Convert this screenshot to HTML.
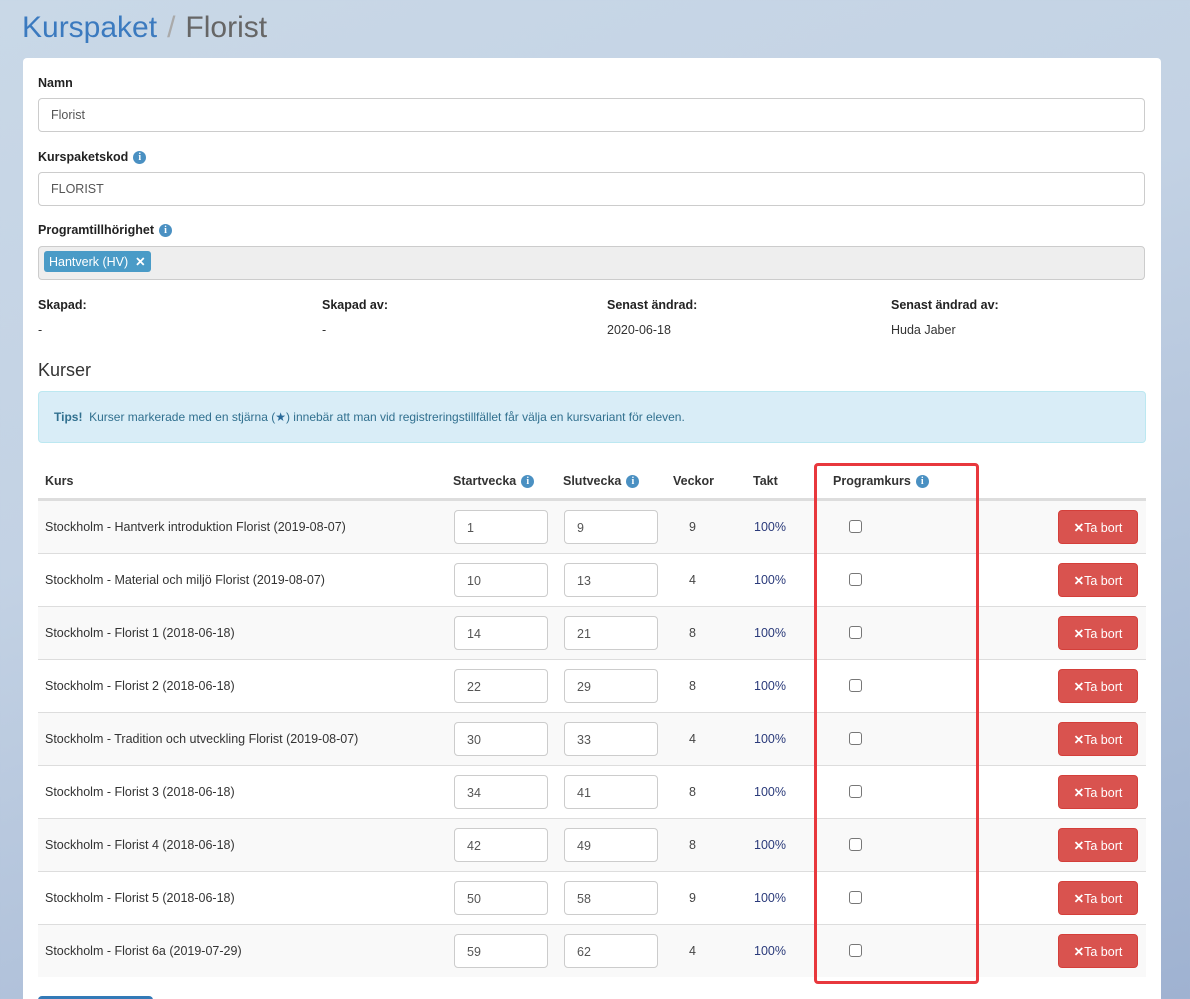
<!DOCTYPE html>
<html style="overflow:hidden;height:999px"><head><meta charset="utf-8"><style>
*{box-sizing:border-box}
html,body{overflow:hidden}
body{margin:0;width:1190px;height:999px;font-family:"Liberation Sans",sans-serif;font-size:12.5px;color:#333;background:linear-gradient(160deg,#c9d8e7 0%,#c3d2e4 40%,#9fb2d1 100%);position:relative}
h1{position:absolute;left:22px;top:11px;margin:0;font-weight:normal;font-size:30px;color:#3b7abf}
h1 span{color:#aaa;margin:0 10px}
h1 b{font-weight:normal;color:#666}
.card{position:absolute;left:23px;top:58px;width:1138px;height:941px;background:#fff;border-radius:4px 4px 0 0}
.abs{position:absolute}
label{position:absolute;font-weight:bold;font-size:12.5px;color:#222}
.inp{position:absolute;left:15px;width:1107px;height:34px;border:1px solid #ccc;border-radius:4px;padding:9px 12px;color:#555}
.info{display:inline-block;width:13px;height:13px;border-radius:50%;background:#4a90c2;color:#fff;font-size:10px;font-weight:bold;text-align:center;line-height:13px;font-family:"Liberation Serif",serif;vertical-align:1px;margin-left:5px}
.tag{position:absolute;left:5px;top:4px;background:#4a9bc7;color:#fff;border-radius:3px;padding:3px 5px;font-size:12.5px}
.row{position:absolute;left:15px;width:1108px;height:53px;border-top:1px solid #ddd}
.row.s{background:#f9f9f9}
.row div{position:absolute;top:19px}
.ni{position:absolute;top:9px!important;width:94px;height:34px;border:1px solid #ccc;border-radius:4px;background:#fff;padding:10px 12px;color:#555}
.cb{top:19px!important;width:13px;height:13px;border:1px solid #777;border-radius:3px;background:#fff}
.btn{top:9px!important;left:1020px;width:80px;height:34px;background:#d9534f;border-radius:4px;color:#fff;text-align:center;line-height:34px;border:1px solid #d43f3a}
</style></head><body>
<h1>Kurspaket<span>/</span><b>Florist</b></h1>
<div class="card">
<label style="left:15px;top:18px">Namn</label>
<div class="inp" style="top:40px">Florist</div>
<label style="left:15px;top:92px">Kurspaketskod<span class="info">i</span></label>
<div class="inp" style="top:114px">FLORIST</div>
<label style="left:15px;top:165px">Programtillhörighet<span class="info">i</span></label>
<div class="inp" style="top:188px;background:#eee;padding:0"><span class="tag">Hantverk (HV) &nbsp;<b>✕</b></span></div>
<label style="left:15px;top:240px">Skapad:</label><div class="abs" style="left:15px;top:265px">-</div>
<label style="left:299px;top:240px">Skapad av:</label><div class="abs" style="left:299px;top:265px">-</div>
<label style="left:584px;top:240px">Senast ändrad:</label><div class="abs" style="left:584px;top:265px">2020-06-18</div>
<label style="left:868px;top:240px">Senast ändrad av:</label><div class="abs" style="left:868px;top:265px">Huda Jaber</div>
<div class="abs" style="left:15px;top:302px;font-size:18px;color:#333">Kurser</div>
<div class="abs" style="left:15px;top:333px;width:1108px;height:52px;background:#d9edf7;border:1px solid #bce8f1;border-radius:4px;padding:18px 15px;color:#31708f;font-size:12px"><b>Tips!</b>&nbsp; Kurser markerade med en stjärna (<span style="color:#2a6a99">★</span>) innebär att man vid registreringstillfället får välja en kursvariant för eleven.</div>
<div class="abs" style="left:22px;top:416px;font-weight:bold">Kurs</div>
<div class="abs" style="left:430px;top:416px;font-weight:bold">Startvecka<span class="info">i</span></div>
<div class="abs" style="left:540px;top:416px;font-weight:bold">Slutvecka<span class="info">i</span></div>
<div class="abs" style="left:650px;top:416px;font-weight:bold">Veckor</div>
<div class="abs" style="left:730px;top:416px;font-weight:bold">Takt</div>
<div class="abs" style="left:810px;top:416px;font-weight:bold">Programkurs<span class="info">i</span></div>
<div class="abs" style="left:15px;top:440px;width:1108px;height:2px;background:#ddd"></div>
</div>
<div id="rows"></div>
<div class="abs" style="left:814px;top:463px;width:165px;height:521px;border:3px solid #e8383d;border-radius:4px"></div>
<div class="abs" style="left:38px;top:996px;width:115px;height:10px;background:#337ab7;border-radius:4px"></div>
<script>
var d=[["Hantverk introduktion Florist (2019-08-07)",1,9,9],["Material och miljö Florist (2019-08-07)",10,13,4],["Florist 1 (2018-06-18)",14,21,8],["Florist 2 (2018-06-18)",22,29,8],["Tradition och utveckling Florist (2019-08-07)",30,33,4],["Florist 3 (2018-06-18)",34,41,8],["Florist 4 (2018-06-18)",42,49,8],["Florist 5 (2018-06-18)",50,58,9],["Florist 6a (2019-07-29)",59,62,4]];
var h="";d.forEach(function(r,i){h+='<div class="row'+(i%2==0?' s':'')+'" style="left:38px;top:'+(500+i*53)+'px"><div style="left:7px">Stockholm - '+r[0]+'</div><div class="ni" style="left:416px">'+r[1]+'</div><div class="ni" style="left:526px">'+r[2]+'</div><div style="left:651px;color:#444">'+r[3]+'</div><div style="left:716px;color:#2a3a7a">100%</div><div class="cb" style="left:811px"></div><div class="btn"><b>✕</b>Ta bort</div></div>';});
document.getElementById("rows").innerHTML=h;
</script>
</body></html>
